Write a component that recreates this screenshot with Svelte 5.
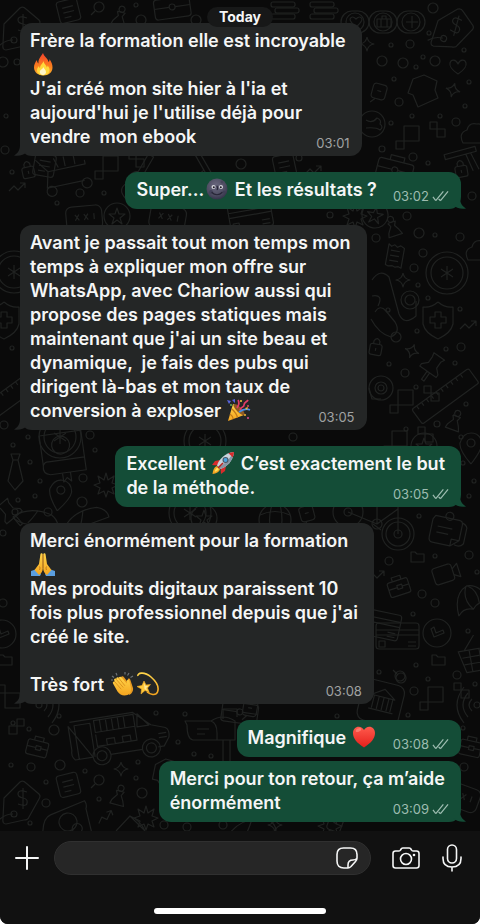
<script>
    const emojiPattern = /(🔥|🌚|🎉|🚀|🙏|👏|💫|❤️)/u;

    const emojis = {
        "🔥": "fire",
        "🌚": "moon",
        "🎉": "party",
        "🚀": "rocket",
        "🙏": "pray",
        "👏": "clap",
        "💫": "dizzy",
        "❤️": "heart"
    };

    const messages = [
        { text: "Frère la formation elle est incroyable\n🔥\nJ'ai créé mon site hier à l'ia et\naujourd'hui je l'utilise déjà pour\nvendre  mon ebook", time: "03:01", tail: true },
        { text: "Super...🌚 Et les résultats ?", time: "03:02", sent: true, tail: true },
        { text: "Avant je passait tout mon temps mon\ntemps à expliquer mon offre sur\nWhatsApp, avec Chariow aussi qui\npropose des pages statiques mais\nmaintenant que j'ai un site beau et\ndynamique,  je fais des pubs qui\ndirigent là-bas et mon taux de\nconversion à exploser 🎉", time: "03:05", tail: true },
        { text: "Excellent 🚀 C’est exactement le but\nde la méthode.", time: "03:05", sent: true, tail: true },
        { text: "Merci énormément pour la formation\n🙏\nMes produits digitaux paraissent 10\nfois plus professionnel depuis que j'ai\ncréé le site.\n\nTrès fort 👏💫", time: "03:08", tail: true },
        { text: "Magnifique ❤️", time: "03:08", sent: true },
        { text: "Merci pour ton retour, ça m’aide\nénormément", time: "03:09", sent: true, tail: true }
    ];

    // name, x, y, rotation
    const doodles = [
        ["tag", 22, 26, 0], ["tag", 455, 27, 15], ["tag", 22, 800, 0],
        ["note", 68, 11, -14], ["note", 68, 785, -14], ["note", 44, 165, 10], ["note", 284, 166, -12],
        ["lens", 98, 8, 0], ["lens", 98, 781, 0], ["lens", 400, 677, 90],
        ["case", 172, 6, -8], ["bag", 38, 747, 14], ["bag", 471, 747, 12], ["bag", 399, 586, -18],
        ["pawn", 120, 17, 15], ["pawn", 119, 796, 15], ["pawn", 393, 227, -18], ["pawn", 455, 421, 20],
        ["bars", 285, 10, 0], ["bars", 324, 10, 0],
        ["pillHeart", 356, 22, 0], ["pillCase", 384, 22, 0], ["pillPlus", 412, 22, 0],
        ["love", 458, 67, 0], ["sparkle", 453, 90, 15], ["sparkle", 403, 280, 0], ["sparkle", 412, 351, 20], ["sparkle", 121, 769, 0], ["sparkle", 367, 44, 0],
        ["badge", 423, 91, 0], ["label", 379, 92, 15], ["bone", 372, 124, 0],
        ["pixels", 408, 138, 0], ["pixels", 396, 443, 0], ["pixels", 432, 699, 0], ["pixels", 107, 168, 0], ["pixels", 8, 697, 90], ["pixels", 402, 402, 0],
        ["cloud", 475, 135, 0], ["cloud", 480, 252, 0], ["lock", 461, 169, -10], ["lock", 28, 170, -12], ["lock", 376, 347, 10],
        ["hammer", 462, 152, -15], ["hammer", 205, 166, 60],
        ["receipt", 395, 256, 10], ["coin", 447, 273, 0], ["coin", 14, 272, 0], ["coin", 60, 437, 0], ["coin", 205, 441, 0],
        ["shield", 438, 320, 0], ["shield", 4, 320, 0], ["clip", 390, 300, 0],
        ["trend", 468, 325, 0], ["trend", 17, 187, 0], ["trend", 105, 817, -20], ["trend", 313, 170, 0], ["trend", 376, 575, 0],
        ["thumbtack", 432, 366, 35], ["thumbtack", 10, 512, -40], ["ruler", 444, 396, -36], ["ruler", 4, 400, -36],
        ["roll", 381, 388, 0], ["star", 424, 446, 0], ["star", 117, 216, 0], ["star", 375, 215, 10],
        ["book", 62, 455, -8], ["tie", 15, 470, 0], ["pin", 60, 495, 10], ["burst", 106, 485, 0], ["burst", 355, 216, 0],
        ["pin", 471, 448, 0], ["cap", 85, 520, -12], ["cap", 35, 520, 18], ["ball", 275, 520, 0], ["label", 307, 514, -15],
        ["bike", 372, 512, 0], ["pad", 447, 530, 12], ["folder", 417, 557, 0], ["folder", 438, 660, 0], ["folder", 5, 660, 0],
        ["video", 446, 573, -18], ["umbrella", 470, 602, -25], ["card", 397, 636, 0], ["card", 378, 624, 12],
        ["clock", 437, 633, 0], ["clock", 2, 634, 0], ["basket", 475, 655, -10], ["bank", 382, 702, 14],
        ["waves", 474, 705, 0], ["waves", 42, 705, 180], ["truck", 118, 735, -9], ["mailbox", 205, 733, 0],
        ["laptop", 68, 822, -10], ["burst", 146, 818, 0], ["tent", 130, 826, 0], ["badge", 167, 775, -8],
        ["cart", 66, 170, -12], ["guitar", 138, 178, 30], ["chat", 84, 216, -5], ["chat", 168, 216, 10], ["case", 395, 169, 14],
        ["card", 250, 216, -10], ["case", 240, 711, 8], ["label", 250, 709, 10], ["chat", 462, 795, 20],
        ["star", 204, 518, 0], ["coin", 190, 513, 0], ["burst", 330, 826, 0], ["cap", 252, 829, 0], ["sparkle", 275, 825, 0], ["label", 335, 824, 20]
    ];

    // x, y, radius
    const dots = [
        [3, 62, 5], [17, 62, 3], [141, 20, 5], [136, 5, 2], [196, 20, 5], [6, 116, 2], [5, 150, 4],
        [433, 8, 5], [429, 33, 2], [410, 44, 4], [391, 45, 2], [382, 61, 5], [403, 63, 5], [416, 67, 2], [423, 57, 2], [435, 61, 5], [464, 50, 2], [469, 82, 2],
        [394, 79, 2], [399, 102, 4], [412, 116, 2], [440, 116, 2], [465, 106, 2], [456, 122, 4], [391, 123, 2], [382, 149, 3], [413, 157, 4], [428, 163, 2], [472, 196, 4], [407, 216, 4],
        [80, 193, 4], [104, 193, 2], [12, 172, 2], [57, 203, 2], [299, 158, 3], [241, 164, 5], [330, 215, 3],
        [376, 238, 4], [419, 233, 5], [435, 235, 2], [460, 237, 4], [423, 253, 4], [414, 268, 4], [418, 285, 2], [428, 298, 2], [388, 310, 2], [460, 309, 2],
        [417, 331, 2], [396, 337, 5], [446, 349, 2], [461, 347, 4], [389, 364, 2], [455, 363, 2], [405, 373, 4], [416, 387, 2], [466, 404, 2], [437, 424, 3], [406, 429, 2], [461, 437, 2],
        [12, 348, 2], [4, 425, 4], [13, 445, 2], [28, 437, 2], [90, 435, 4], [95, 450, 2], [30, 462, 2], [40, 481, 2], [83, 478, 4], [18, 500, 2], [35, 496, 2], [82, 502, 5], [48, 512, 4], [15, 512, 3],
        [293, 437, 4], [463, 463, 2], [474, 481, 2], [469, 496, 2], [419, 516, 2], [389, 561, 4], [435, 556, 2], [469, 555, 4], [422, 594, 4], [435, 603, 4], [413, 614, 2], [468, 631, 2], [477, 572, 2],
        [416, 665, 2], [400, 676, 5], [428, 679, 2], [457, 675, 4], [414, 691, 4], [379, 672, 2], [408, 715, 2], [463, 728, 2], [464, 767, 4], [475, 684, 2],
        [13, 723, 2], [29, 729, 2], [54, 730, 5], [59, 716, 2], [11, 765, 2], [31, 767, 4], [60, 765, 5], [85, 771, 2], [46, 782, 2], [46, 803, 4], [136, 778, 2], [142, 793, 5], [99, 799, 2], [30, 823, 2], [138, 762, 2],
        [156, 713, 2], [185, 714, 2], [178, 742, 2], [194, 754, 2], [211, 756, 2], [164, 825, 4], [187, 827, 4], [223, 825, 4], [3, 533, 3], [3, 603, 4], [337, 716, 2]
    ];
</script>

<svg class="defs" width="0" height="0" aria-hidden="true">
    <defs>
        <linearGradient id="flame" x1="0" y1="0" x2="0" y2="1"><stop offset="0" stop-color="#f4422c"/><stop offset=".55" stop-color="#fb7a1e"/><stop offset="1" stop-color="#fdb52c"/></linearGradient>
        <radialGradient id="lunar" cx=".45" cy=".35" r=".65"><stop offset="0" stop-color="#6b6980"/><stop offset=".7" stop-color="#4c4b60"/><stop offset="1" stop-color="#34334a"/></radialGradient>
        <linearGradient id="gold" x1="0" y1="0" x2="0" y2="1"><stop offset="0" stop-color="#ffd44a"/><stop offset="1" stop-color="#f5a51f"/></linearGradient>
        <linearGradient id="red" x1="0" y1="0" x2="0" y2="1"><stop offset="0" stop-color="#ff5a4c"/><stop offset="1" stop-color="#e5201c"/></linearGradient>

        <symbol id="e-fire" viewBox="0 0 24 24">
            <path fill="url(#flame)" d="M12 1c1 4 5 5 5.500 9 1-.8 1.200-2 1-3 2 3 3 5.500 3 8.500 0 4.800-4 8-9 8s-9.500-3-9.500-8c0-3 1.300-5.500 3-7.500 0 1.800.5 2.800 1.500 3.400C7 7.500 9.500 5 12 1z"/>
            <path fill="#ffd83b" d="M12.500 9c.3 3 3.200 4 3.200 6.500.7-.5 1-1.200 1-2 1.500 2 2 3.300 1.800 5-.3 2.800-3 4.700-6.200 4.700s-6.300-1.800-6.300-5c0-1.700.8-3.200 2-4.300 0 1 .3 1.600 1 2C9 13 11.500 12 12.500 9z"/>
            <path fill="#fff6c8" d="M12.500 15c.2 2 2.500 2.600 2.500 5 0 1.600-1.200 2.900-3 2.900s-3.200-1.200-3.200-2.900c0-2.200 2.800-2.800 3.700-5z"/>
        </symbol>
        <symbol id="e-moon" viewBox="0 0 24 24">
            <circle cx="12" cy="12" r="10.500" fill="url(#lunar)"/>
            <circle cx="6" cy="15" r="2" fill="#43425a"/><circle cx="17" cy="5" r="1.500" fill="#47465c"/><circle cx="19" cy="15" r="1.500" fill="#3f3e55"/>
            <circle cx="8.500" cy="10" r="2" fill="#d8d8df"/><circle cx="16" cy="10" r="2" fill="#d8d8df"/>
            <circle cx="8.800" cy="10.200" r="1" fill="#1c1b27"/><circle cx="15.800" cy="10.200" r="1" fill="#1c1b27"/>
            <path d="M12 9c.6 2 1 3 .2 3.600M7 15.500c2.500 3 7.500 3 10 0" fill="none" stroke="#272637" stroke-width="1.200" stroke-linecap="round"/>
        </symbol>
        <symbol id="e-party" viewBox="0 0 24 24">
            <path fill="url(#gold)" d="M1 23 6 6c3 1 10 7 11 11z"/>
            <path d="M5 11c2 2 5 6 5.500 8.500M3 16c1.800 1.300 3 3 3.300 5.200" stroke="#c47a18" stroke-width="1.300" fill="none"/>
            <ellipse cx="12" cy="11.500" rx="2.500" ry="7.500" transform="rotate(-45 12 11.500)" fill="#8d5a24"/>
            <path d="M10 10c2-3 3-5 1-8M13 12c1-4 4-2 4-5s3-3 4-5" fill="none" stroke="#e23d68" stroke-width="1.700"/>
            <path d="M12 14c3-2 7-4 11-2" fill="none" stroke="#4a8fe7" stroke-width="1.700"/>
            <path fill="#5864dc" d="M0 2l4 1-2 3zM5 2l3-1v4z"/>
            <circle cx="14" cy="3" r="1" fill="#f7c93c"/><circle cx="21" cy="8" r="1" fill="#e04a5c"/><circle cx="18" cy="17" r="1" fill="#f7b532"/><circle cx="21" cy="20" r="1" fill="#e04a8c"/><circle cx="4" cy="7" r="1" fill="#62ad59"/>
            <path fill="#f7b532" d="M18 10l3-1-1 3z"/>
        </symbol>
        <symbol id="e-rocket" viewBox="0 0 24 24">
            <path fill="#f5a423" d="M6 15c-3 1-4 4-4.500 8C5 22.500 8.500 21 9 18z"/><path fill="#ffe35a" d="M6.500 16.500c-1.800 1-2.500 2.500-2.800 4.300C5.500 20.500 7 19.500 8 18z"/>
            <path fill="#d92b2b" d="M9 9 4 10 1 14l6 .5zM15 15l-1 5-4 3-.5-6z"/>
            <path fill="#c9d3dc" d="M6 14.500C8 8 14 2 23 1c-1 9-7 15-13.500 17z"/>
            <path fill="#8796a6" d="M23 1c-1 9-7 15-13.500 17l-1.800-1.700C15 12 19 7 23 1z"/>
            <path fill="#d92b2b" d="M17.500 2.200C19.300 1.500 21 1.200 23 1c-.2 2-.5 3.700-1.100 5.400z"/>
            <circle cx="14.500" cy="9" r="3" fill="#4a5866"/><circle cx="14.500" cy="9" r="1.900" fill="#4aa5e0"/>
            <path d="M12 12l-5 5" stroke="#b32323" stroke-width="1.600"/>
        </symbol>
        <symbol id="e-pray" viewBox="0 0 24 24">
            <path fill="#5b9fe0" d="M0 19l6-2 4 5-1 2H0zM24 19l-6-2-4 5 1 2h9z"/>
            <path fill="url(#gold)" d="M11.800 2c-1-1.200-2.200-.8-2.400.6L8 12l-4.500 6 4.500 5c2.500-1.500 3.800-4 3.800-7z"/>
            <path fill="url(#gold)" d="M12.200 2c1-1.200 2.200-.8 2.400.6L16 12l4.500 6-4.500 5c-2.500-1.500-3.800-4-3.800-7z"/>
            <path d="M12 2v14M8.500 14.500c.6 1.200.5 2.500 0 3.500M15.500 14.500c-.6 1.200-.5 2.500 0 3.500" fill="none" stroke="#b7701b" stroke-width=".9"/>
        </symbol>
        <symbol id="e-clap" viewBox="0 0 24 24">
            <path d="M2 4l2 1.500M6 1l1 2.500M1 8h2M19 1l-1.500 2.500M23 4l-2.500 1.500M15 0v2.500" stroke="#6c7277" stroke-width="1.200"/>
            <path fill="#e89a20" d="M11 5c1-1.300 2.300-.8 3 .2l4 5.300-.2-2.500c0-1.700 2-2 2.500-.3L23 16c.6 3-1.500 6-4 7z"/>
            <path fill="url(#gold)" d="M3 11.500c-.6-1.500.8-2.600 2-1.600L4.300 8.500c-.8-1.600.9-2.700 2.100-1.500-.5-1.600 1.200-2.500 2.300-1.300C9.500 4.300 11 4.500 11.700 5.500l5 6 .2-2.500c.2-1.700 2.100-1.600 2.500 0l1.600 7c.7 4-2 7.500-6.500 7.500-3 0-5-1.500-7-4z"/>
            <path d="M5 10l6 7M6.400 7.500l6.600 7.700M8.700 6l6 7.500" stroke="#d98f1c" stroke-width=".9" stroke-linecap="round"/>
        </symbol>
        <symbol id="e-dizzy" viewBox="0 0 24 24">
            <path d="M2 4C1 1 8-1 15 5s8 11 6.500 15S14 22.500 11 20" fill="none" stroke="url(#gold)" stroke-width="1.600"/>
            <path fill="#ffc93b" stroke="#f4a926" stroke-width=".6" d="M8 9l2 4 4.500-.5-3 3.500 1.800 4.500L9 18.500 5 22l.5-5L1 14.500l5-1z"/>
            <path fill="#ffe89a" d="M8 11l1.400 3 2.800.1-2.100 2 .8 2.400L8.500 17z"/>
        </symbol>
        <symbol id="e-heart" viewBox="0 0 24 24">
            <path fill="url(#red)" d="M12 22.500C5 18 1 13.500 1 8c0-3.600 2.500-6.300 5.700-6.300 2.300 0 4.300 1.300 5.300 3.400 1-2.100 3-3.400 5.300-3.400C20.500 1.700 23 4.400 23 8c0 5.500-4 10-11 14.500z"/>
            <ellipse cx="6.500" cy="5" rx="3" ry="1.700" transform="rotate(-25 6.500 5)" fill="#ff8f80" opacity=".7"/>
        </symbol>

        <g id="d-tag"><path d="M-18-2-2-18Q1-20 4-17L17-6Q19-4 17-1L7 17Q6 20 2 20L-16 24Q-20 24-19 18z"/><circle cx="-8" cy="14" r="3"/><path d="M-9 14q-8 0-14 6M5-8Q-4-11-4-6Q-4-3 1-2T5 3Q5 7-4 4M1-12V9"/></g>
        <g id="d-note"><rect x="-10" y="-11" width="21" height="22" rx="3"/><path d="M-5-4H6M-5 1H6M-5 6H2"/></g>
        <g id="d-lens"><circle cx="1" cy="-1" r="5"/><path d="M-3 3-7 7"/></g>
        <g id="d-case"><rect x="-18" y="-8" width="36" height="20" rx="3"/><path d="M-7-8v-5H7v5M-18 1H-3M3 1h15"/><circle r="3" cy="1"/></g>
        <g id="d-bag"><rect x="-11" y="-6" width="21" height="15" rx="2"/><path d="M-5-6v-4H4v4M-11 1H-2M3 1h7M-2-1h5v4h-5z"/></g>
        <g id="d-pawn"><path d="M-4-5-2-1-6 5-7 9H7L5 4 2-1 4-5-4-5"/><circle cy="-8" r="3"/></g>
        <g id="d-bars"><rect x="-14" y="-8" width="24" height="5" rx="2"/><rect x="-10" y="-2" width="24" height="5" rx="2"/><rect x="-14" y="4" width="24" height="5" rx="2"/></g>
        <g id="d-pill"><rect x="-15" y="-11" width="28" height="22" rx="11"/><circle r="9" cx="-1"/></g>
        <g id="d-pillHeart"><use href="#d-pill"/><path d="M0 5Q-6 0-6-3Q-4-7 0-3Q4-7 6-3Q6 0 0 5"/></g>
        <g id="d-pillCase"><use href="#d-pill"/><path d="M-7-3H7V5H-7zM-2-3v-3h4v3M-3-3v8M3-3v8"/></g>
        <g id="d-pillPlus"><use href="#d-pill"/><path d="M-6 0H6M0-6V6"/></g>
        <g id="d-love"><path d="M0 7C-6 3-9 0-8-4S-2-8 0-3C2-8 7-8 8-4S6 3 0 7"/></g>
        <g id="d-sparkle"><path d="M0-7Q1-1 7 0Q1 1 0 7Q-1 1-7 0Q-1-1 0-7"/></g>
        <g id="d-badge"><path d="M-10-12 1-16 14-10 12-1 15 7-5 16-10 4-15 2z"/></g>
        <g id="d-label"><rect x="-7" y="-8" width="14" height="15" rx="3"/><path d="M-2 7-6 12M-2-1h4"/></g>
        <g id="d-bone"><circle r="13"/><path d="M-6-4Q0 0 5-6Q10-4 8 0Q12 3 8 6Q4 3-6 4"/></g>
        <g id="d-pixels"><path d="M-4-12H11V3H-4zM-12 3h8v8h-8zM22-16h7v7h-7zM29-9h8v8h-8zM11 3h0"/></g>
        <g id="d-cloud"><path d="M-12 8Q-17-2-8-5Q-6-13 2-11Q9-12 11-4Q18 0 12 8z"/></g>
        <g id="d-lock"><rect x="-6" y="-3" width="12" height="11" rx="2"/><path d="M-3-3v-3q3-5 6 0v3M0 1v3"/></g>
        <g id="d-hammer"><path d="M-18-2H14V3H-18zM3 3l3 18M8 3l4 18"/></g>
        <g id="d-receipt"><path d="M-8-11l3 2 3-2 3 2 3-2 4 2v20l-3-1-3 1-3-1-4 1-3-1zM-5-5H4M-5 0H4M-5 5H4"/></g>
        <g id="d-coin"><circle r="21"/><circle r="16"/><path d="M0-7V7M-6-4 6 4M-6 4 6-4"/></g>
        <g id="d-shield"><path d="M0-18Q7-12 15-13V4Q13 13 0 19Q-13 13-15 4V-13Q-7-12 0-18M-3-8H3v5H8V3H3V8H-3V3H-8V-3H-3z"/></g>
        <g id="d-clip"><path d="M-18-20q8-12 17-3l10 37q5 12 17 2l0-15M-18-4q12-2 6 10M-15 12q5-8 11-1l9 11q6 10-4 15-12-3-20-18"/><circle cx="20" cy="0" r="9"/><circle cx="20" cy="0" r="5"/></g>
        <g id="d-trend"><path d="M-8 4-3-1 1 3 8-4M3-4H8V1"/></g>
        <g id="d-thumbtack"><path d="M-6-12H7L5-8V-1L10 4V7H-10V4L-5-1V-8zM-1 7V17H2V7"/></g>
        <g id="d-ruler"><rect x="-34" y="-8" width="70" height="18" rx="2"/><path d="M-28-8v4M-22-8v4M-16-8v4M-10-8v4M-4-8v4M2-8v4M8-8v4M14-8v4M20-8v4M26-8v4"/></g>
        <g id="d-roll"><circle r="12"/><circle r="6"/><circle r="3"/><path d="M-12 0-9 11H0"/></g>
        <g id="d-star"><circle r="13"/><path d="M0-8 2-2 8-2 3 2 5 8 0 4-5 8-3 2-8-2-2-2z"/></g>
        <g id="d-book"><path d="M-20-22H22V18H-14Q-22 16-20 8zM-20 8Q-18 4-14 5H22M-2 18v9l4-4 4 4v-9"/><circle cy="-10" r="9"/></g>
        <g id="d-tie"><path d="M-4-16H5L3-10H-2zM-2-10-7 11 0 20 8 11 3-10"/></g>
        <g id="d-pin"><path d="M0 16Q-12 2-11-5Q-8-15 0-15Q9-15 11-5Q11 2 0 16"/><circle cy="-5" r="4"/></g>
        <g id="d-burst"><path d="M0-12 2-5 8-9 6-2 12 0 6 3 8 9 2 6 0 12-2 6-8 9-6 3-12 0-6-2-8-9-2-5z"/></g>
        <g id="d-cap"><path d="M-22 4Q-10-12 14-10Q24-6 24 2L-4 6Q-16 8-22 4M0-10Q-3 0-6 5"/></g>
        <g id="d-ball"><circle r="16"/><path d="M-15-5Q0-12 15-5M-3-15Q-8 0-3 15M5-15Q9 0 5 15"/></g>
        <g id="d-bike"><circle cx="-24" cy="0" r="15"/><circle cx="-24" cy="0" r="4"/><circle cx="26" cy="22" r="16"/><circle cx="26" cy="22" r="12"/><circle cx="26" cy="22" r="4"/><path d="M26 22V-8M-24 0 5 12 26-3M5 12V-8M1 12l8 6"/><circle cx="5" cy="12" r="5"/></g>
        <g id="d-pad"><path d="M-14-12H10Q14-12 14-8V8L6 15H-12Q-16 15-16 10V-8zM14 8H6V15M14-10Q20-8 19-4V10Q16 15 10 13M-10-2H5M-10 4H2"/><circle cy="-14" r="4"/></g>
        <g id="d-folder"><path d="M-6-5h4l2 2h7v8H-6z"/></g>
        <g id="d-video"><rect x="-13" y="-8" width="20" height="17" rx="3"/><path d="M7-2 13-6V8L7 4"/></g>
        <g id="d-umbrella"><path d="M-16 8Q-12-14 4-16Q18-12 16 8Q8 2 0 8Q-8 2-16 8M3-16Q-6-6 0 8M4-16Q12-8 8 5"/></g>
        <g id="d-card"><rect x="-21" y="-13" width="43" height="26" rx="3"/><path d="M-21-6H22M-21-1H22M-18 5h6v6h-6zM11 6h8M11 10h8"/></g>
        <g id="d-clock"><circle r="14"/><path d="M-6-4-3 4 7 0 6-3-1 0-3-6z"/></g>
        <g id="d-basket"><path d="M-16-6H16L12 16H-11zM-13 1H14M-12 8H13M-5-6v22M5-6v22M-10-6 2-20"/></g>
        <g id="d-bank"><rect x="-22" y="-20" width="42" height="42" rx="8"/><path d="M-12-5 0-13 12-5zM-9-5V8M-4-5V8M1-5V8M6-5V8M10-5V8M-12 9H13"/></g>
        <g id="d-waves"><path d="M-2-6Q-8 0-2 6M-6-12Q-16 0-6 12M-10-18Q-24 0-10 18"/><circle r="3" cx="3"/></g>
        <g id="d-truck"><path d="M-46-20H18L34-5 48 0Q52 3 50 10L44 18H38M22 18H-10M-28 18H-46Q-50 14-48 8V-16zM-42 18V-16H-26V18M-22-18H18V-6H-22zM-16-18v12M-10-18v12M-4-18v12M2-18v12M8-18v12M-22-4V8H18V-6M22-18 32-5H20zM-12 8V2h8v6M4 8V2h8v6M40 5h8M40 9h8"/><circle cx="-19" cy="18" r="9"/><circle cx="-19" cy="18" r="5"/><circle cx="31" cy="18" r="9"/><circle cx="31" cy="18" r="5"/></g>
        <g id="d-mailbox"><path d="M-20-12H6Q12-10 12 0V7H-12Q-18 6-18-8zM6-12Q18-20 30-12V7H12M18 7V38M25 7V38M18-14v-10h14v8M-8-4H4M-8 1H0"/></g>
        <g id="d-laptop"><path d="M-28 16Q-26-8-16-10L20-18Q22-14 20-10L22 22"/><circle cy="0" r="9"/><circle cx="8" cy="8" r="5"/></g>
        <g id="d-tent"><path d="M-14 5 0-10 15 5M0-10Q10-6 15 5"/></g>
        <g id="d-cart"><path d="M-28-16-18-2H20V-6M-18-2-22 14 16 14M-10-14l3 10M0-14V-4M10-14V-4"/><circle cx="-18" cy="18" r="5"/><circle cx="18" cy="17" r="5"/></g>
        <g id="d-guitar"><path d="M-3-26H3V-6Q12 0 6 8Q14 20 0 24Q-14 20-6 8Q-12 0-3-6z"/></g>
        <g id="d-chat"><rect x="-18" y="-10" width="36" height="24" rx="6"/><path d="M-9-2l4 6M-5-2l-4 6M0-2l4 6M4-2l-4 6M10-2v6"/></g>
    </defs>
</svg>

<div class="screen">
    <main class="chat">
        <svg class="wallpaper" viewBox="0 0 480 831" preserveAspectRatio="xMidYMin slice" aria-hidden="true">
            {#each doodles as [name, x, y, angle]}
                <use href="#d-{name}" transform="translate({x} {y}) rotate({angle})"/>
            {/each}
            {#each dots as [cx, cy, r]}
                <circle {cx} {cy} {r}/>
            {/each}
        </svg>

        <div class="day"><span>Today</span></div>

        {#each messages as { text, time, sent, tail }, i}
            <article class="bubble" class:sent class:follows={sent && messages[i - 1]?.sent}>
                <p>{#each text.split(emojiPattern) as part}{#if emojis[part]}<svg class="emoji" role="img" aria-label={part}><use href="#e-{emojis[part]}"/></svg>{:else}{part}{/if}{/each}<span class="meta"><time>{time}</time>{#if sent}<svg class="ticks" viewBox="0 0 18 12" aria-label="Distribué"><path d="M1 7l3 4M4 11 12 1M7 9l2 2M9 11 17 1"/></svg>{/if}</span></p>
                {#if tail}
                    <svg class="tail" viewBox="0 0 14 14" aria-hidden="true"><path d="M7 0v3c0 5 2 8 6 10.500C8 14.500 3 13 0 10V0z"/></svg>
                {/if}
            </article>
        {/each}
    </main>

    <footer>
        <form class="composer" on:submit|preventDefault>
            <button type="button" class="plus" aria-label="Joindre">
                <svg width="24" height="24" viewBox="0 0 24 24"><path d="M12 1v22M1 12h22"/></svg>
            </button>
            <div class="field">
                <input type="text" aria-label="Message">
                <button type="button" aria-label="Autocollants">
                    <svg width="24" height="24" viewBox="0 0 24 24"><path d="M13 22H9Q2 22 2 15V8.500Q2 2 8.500 2H15.500Q22 2 22 8.500V12Q22 14 20.500 15.500L16 20.500Q14.500 22 13 22zM13 22V19Q13 14 18 14Q21 14 22 12"/></svg>
                </button>
            </div>
            <button type="button" class="camera" aria-label="Appareil photo">
                <svg width="28" height="24" viewBox="0 0 28 24"><path d="M3.500 5H7Q8 5 8.500 4L9.500 2.500Q10 2 11 2H17Q18 2 18.500 2.500L19.500 4Q20 5 21 5H24.500Q27 5 27 7.500V19.500Q27 22 24.500 22H3.500Q1 22 1 19.500V7.500Q1 5 3.500 5z"/><circle cx="14" cy="13" r="5.500"/><circle class="dot" cx="22" cy="9" r="1.300"/></svg>
            </button>
            <button type="button" class="mic" aria-label="Message vocal">
                <svg width="20" height="28" viewBox="0 0 20 28"><rect x="5.500" y="1" width="9" height="18" rx="4.500"/><path d="M1 13v1.500Q1 23 10 23T19 14.500V13M10 23v4"/></svg>
            </button>
        </form>
        <div class="home"></div>
    </footer>
</div>

<style>
    :global(body) {
        margin: 0;
        background-color: #ffffff;
    }

    .defs {
        position: absolute;
    }

    .screen {
        display: flex;
        flex-direction: column;
        min-height: 100vh;
        overflow: hidden;
        border-radius: 0 0 8px 8px;
        background-color: #111111;
        color: #f5f6f6;
        font-family: Inter, "Liberation Sans", sans-serif;
    }

    .chat {
        position: relative;
        flex: 1;
        display: flex;
        flex-direction: column;
        align-items: flex-start;
        gap: 16px;
        padding: 23px 19px 9px 20px;
        background-color: #0a0a0a;
    }

    .wallpaper {
        position: absolute;
        left: 0;
        top: 0;
        width: 100%;
        height: 100%;
        fill: none;
        stroke: #202221;
        stroke-width: 1.2;
        stroke-linejoin: round;
    }

    .day {
        position: absolute;
        top: 6px;
        left: 0;
        right: 0;
        z-index: 2;
        text-align: center;
    }

    .day span {
        display: inline-block;
        padding: 0 12px;
        border-radius: 10px;
        background-color: #171818;
        font-size: 14px;
        font-weight: 700;
        line-height: 20px;
    }

    .bubble {
        position: relative;
        box-sizing: border-box;
        max-width: 92%;
        padding: 6px 16px 7px 10px;
        border-radius: 12px;
        background-color: #242626;
    }

    .sent {
        align-self: flex-end;
        padding-left: 11px;
        background-color: #144d37;
    }

    .follows {
        margin-top: -12px;
    }

    p {
        display: flow-root;
        margin: 0;
        font-size: 18px;
        font-weight: 600;
        line-height: 24px;
        white-space: pre-wrap;
    }

    .emoji {
        width: 24px;
        height: 24px;
        margin: -6px 1px -2px;
        vertical-align: middle;
    }

    .meta {
        float: right;
        display: flex;
        align-items: center;
        gap: 3px;
        margin: 11px -4px -1px 16px;
        color: #a0a2a2;
        font-size: 13px;
        font-weight: 400;
        line-height: 14px;
    }

    .sent .meta {
        color: #9dbcb0;
    }

    .ticks {
        width: 17px;
        height: 12px;
        fill: none;
        stroke: currentColor;
        stroke-width: 1.3;
    }

    .tail {
        position: absolute;
        right: -6px;
        bottom: 0;
        width: 14px;
        height: 14px;
        fill: #144d37;
    }

    .bubble:not(.sent) .tail {
        right: auto;
        left: -7px;
        transform: scaleX(-1);
        fill: #242626;
    }

    footer {
        background-color: #111111;
    }

    .composer {
        display: flex;
        align-items: center;
        padding: 10px 18px 0 15px;
    }

    .field {
        flex: 1;
        display: flex;
        align-items: center;
        min-width: 0;
        margin: 0 21px 0 15px;
        padding-right: 11px;
        border: 1px solid #303030;
        border-radius: 17px;
        background-color: #262626;
    }

    input {
        flex: 1;
        min-width: 0;
        height: 32px;
        padding: 0 14px;
        border: 0;
        outline: 0;
        background: none;
        color: inherit;
        font: inherit;
    }

    button {
        display: flex;
        padding: 0;
        border: 0;
        background: none;
        color: #f5f6f6;
    }

    button svg {
        fill: none;
        stroke: currentColor;
        stroke-width: 1.6;
        stroke-linecap: round;
        stroke-linejoin: round;
    }

    .plus svg {
        stroke-width: 2;
    }

    .camera {
        margin-right: 22px;
    }

    .camera .dot {
        fill: currentColor;
        stroke: none;
    }

    .home {
        width: 36%;
        height: 6px;
        margin: 33px auto 10px;
        border-radius: 3px;
        background-color: #ffffff;
    }
</style>
